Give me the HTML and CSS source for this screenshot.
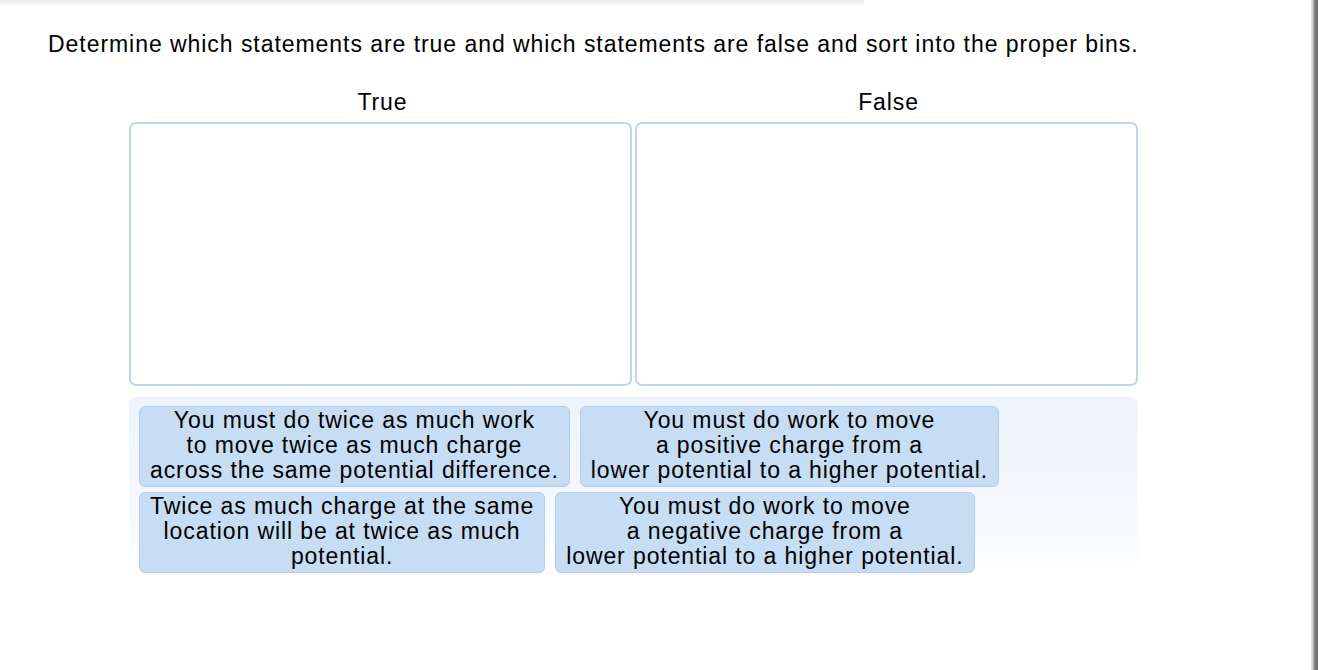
FILE: index.html
```html
<!DOCTYPE html>
<html>
<head>
<meta charset="utf-8">
<link rel="stylesheet" href="styles.css">
</head>
<body>
<div class="page">
  <div class="topbar"></div>
  <div class="content">
    <p class="prompt">Determine which statements are true and which statements are false and sort into the proper bins.</p>
    <div class="bins">
      <div class="bin">
        <div class="bin-label">True</div>
        <div class="bin-box"></div>
      </div>
      <div class="bin">
        <div class="bin-label">False</div>
        <div class="bin-box"></div>
      </div>
    </div>
    <div class="pool">
      <div class="card">You must do twice as much work<br>to move twice as much charge<br>across the same potential difference.</div>
      <div class="card">You must do work to move<br>a positive charge from a<br>lower potential to a higher potential.</div>
      <div class="card">Twice as much charge at the same<br>location will be at twice as much<br>potential.</div>
      <div class="card">You must do work to move<br>a negative charge from a<br>lower potential to a higher potential.</div>
    </div>
  </div>
  <div class="scrollbar"></div>
</div>
</body>
</html>
```
FILE: styles.css
```css
html, body {
  margin: 0;
  padding: 0;
  background: #ffffff;
}
body {
  font-family: "Liberation Sans", Arial, sans-serif;
  color: #000;
  width: 1318px;
  height: 670px;
  overflow: hidden;
}
.page {
  position: relative;
  width: 1318px;
  height: 670px;
}
.topbar {
  width: 864px;
  height: 6px;
  background: linear-gradient(#ececec, #fafafa);
}
.content {
  padding-left: 48px;
  width: 1100px;
}
.prompt {
  margin: 25px 0 0 0;
  font-size: 23px;
  line-height: 26px;
  letter-spacing: 0.95px;
  white-space: nowrap;
}
.bins {
  display: flex;
  gap: 3px;
  margin: 32px 0 0 81px;
}
.bin {
  width: 503px;
  display: flex;
  flex-direction: column;
}
.bin-label {
  text-align: center;
  font-size: 23px;
  line-height: 26px;
  letter-spacing: 0.9px;
  height: 33px;
  padding-left: 4px;
}
.bin-box {
  height: 260px;
  border: 2px solid #bdd7f1;
  border-radius: 7px;
  background: #fff;
}
.pool {
  margin: 11px 0 0 81px;
  width: 989px;
  min-height: 164px;
  padding: 9px 10px 5px 10px;
  border-radius: 7px;
  background: linear-gradient(to bottom, #eef4fc 0%, #f5f8fd 60%, #ffffff 100%);
  display: flex;
  flex-wrap: wrap;
  column-gap: 10px;
  row-gap: 5px;
  align-content: flex-start;
}
.card {
  background: #c6ddf3;
  border: 1px solid #b1cfee;
  border-radius: 6px;
  padding: 1px 10px 3px 10px;
  font-size: 23px;
  line-height: 25px;
  letter-spacing: 0.9px;
  text-align: center;
}
.scrollbar {
  position: absolute;
  top: 0;
  right: 0;
  width: 7px;
  height: 670px;
  background: linear-gradient(to right, #e4e4e4 0px, #c8c8c8 2px, #9a9a9a 3px, #7a7a7a 4px, #6e6e6e 7px);
}
```
